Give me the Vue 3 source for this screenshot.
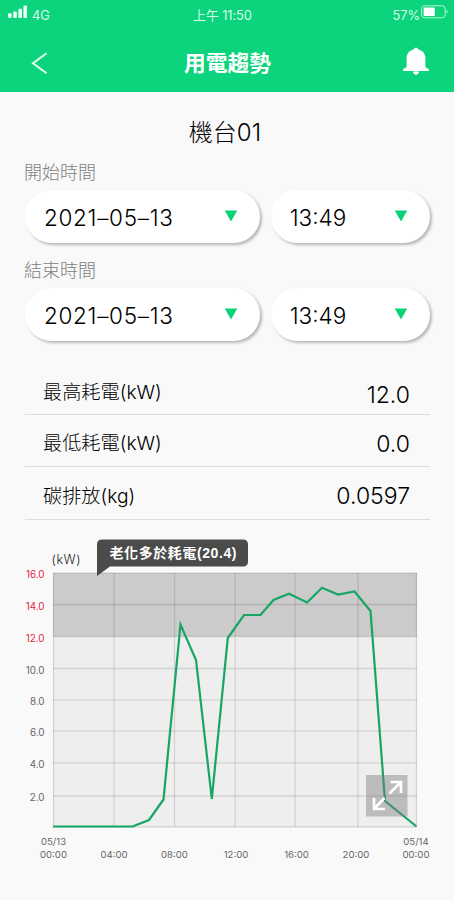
<template>
  <div class="trend">
    <header class="trend__header">
      <div class="trend__status">
        <div class="trend__status-side">
          <svg class="trend__signal" width="20" height="14" viewBox="0 0 20 14">
            <rect x="0" y="8.3" width="3.6" height="4.7" rx="1" />
            <rect x="5.2" y="6.4" width="3.6" height="6.6" rx="1" />
            <rect x="10.4" y="3.8" width="3.6" height="9.2" rx="1" />
            <rect x="15.4" y="0.6" width="3.6" height="12.4" rx="1" />
          </svg>
          <span class="trend__network">4G</span>
        </div>
        <span class="trend__clock">上午 11:50</span>
        <div class="trend__status-side trend__status-side--end">
          <span class="trend__percent">57%</span>
          <svg class="trend__battery" width="28" height="14" viewBox="0 0 28 14">
            <rect x="0.6" y="0.8" width="23.6" height="12" rx="3" fill="none" stroke="#b9f3d5" />
            <rect x="2.6" y="2.6" width="11.2" height="8.4" rx="1" fill="#fff" />
            <path d="M25.6 4.8 Q27.6 6.8 25.6 8.8Z" fill="#d8f9e8" />
          </svg>
        </div>
      </div>
      <nav class="trend__nav">
        <svg class="trend__back" width="18" height="24" viewBox="0 0 18 24">
          <path d="M15.5 2.2 L2 12.2 L15.5 22.2" fill="none" stroke="#e4fff1" stroke-width="2" />
        </svg>
        <h1 class="trend__heading">用電趨勢</h1>
        <svg class="trend__bell" width="28" height="28" viewBox="0 0 28 28">
          <path d="M14 0.8 C12.6 0.8 11.8 1.5 11.6 2.4 C7.2 3.4 4.6 6.8 4.6 11 V19 C4.6 20.4 3.6 21 2 21.6 C0.4 22.2 0.6 24 2 24 H26 C27.4 24 27.6 22.2 26 21.6 C24.4 21 23.4 20.4 23.4 19 V11 C23.4 6.8 20.8 3.4 16.4 2.4 C16.2 1.5 15.4 0.8 14 0.8Z" fill="#fff" />
          <path d="M11 24.5 H17 C17 28.7 11 28.7 11 24.5Z" fill="#fff" />
        </svg>
      </nav>
    </header>

    <main class="trend__body">
      <h2 class="trend__machine">機台01</h2>

      <section v-for="range in ranges" :key="range.label" class="trend__range">
        <div class="trend__label">{{ range.label }}</div>
        <div class="trend__pickers">
          <button class="trend__picker trend__picker--date">
            <span>{{ range.date }}</span>
            <svg width="14" height="12" viewBox="0 0 14 12"><path d="M0.8 0.5 H13.2 L7 11.5Z" fill="#09d276" /></svg>
          </button>
          <button class="trend__picker trend__picker--time">
            <span>{{ range.time }}</span>
            <svg width="14" height="12" viewBox="0 0 14 12"><path d="M0.8 0.5 H13.2 L7 11.5Z" fill="#09d276" /></svg>
          </button>
        </div>
      </section>

      <dl class="trend__stats">
        <div v-for="stat in stats" :key="stat.label" class="trend__stat">
          <dt>{{ stat.label }}</dt>
          <dd>{{ stat.value }}</dd>
        </div>
      </dl>
    </main>

    <svg class="chart" width="454" height="370" viewBox="0 530 454 370">
      <rect x="53" y="573" width="364" height="254" fill="#eeeeee" />
      <rect x="53" y="573" width="364" height="63.5" fill="#cbcbcb" />
      <path v-for="x in gridX" :key="'x' + x" :d="`M${x} 573V827`" class="chart__grid" />
      <path v-for="tick in yTicks" :key="'y' + tick.y" :d="`M53 ${tick.y}H417`" class="chart__grid" />
      <path d="M53 827H417" class="chart__grid" />

      <text x="51.5" y="564" class="chart__unit" textLength="29">(kW)</text>
      <text
        v-for="tick in yTicks"
        :key="tick.label"
        x="44.5"
        :y="tick.y + 5.2"
        class="chart__y"
        :class="{ 'chart__y--over': tick.over }"
      >{{ tick.label }}</text>

      <text v-for="tick in xTicks" :key="tick.x" :x="tick.x" y="857.5" class="chart__x">{{ tick.label }}</text>
      <text x="53.5" y="845" class="chart__x">05/13</text>
      <text x="416" y="845" class="chart__x">05/14</text>

      <polyline :points="linePoints" class="chart__line" />

      <g class="chart__expand">
        <rect x="366" y="775" width="41.5" height="41.5" fill="#777" fill-opacity="0.42" />
        <path d="M389.5 793.5 L401 782 M390.5 782 H401 V793 M384.5 798 L374 809 M374 798 V809 H385" fill="none" stroke="#fff" stroke-width="2.7" />
      </g>

      <path d="M102 539.5 H243 Q248 539.5 248 544.5 V561.5 Q248 566.5 243 566.5 H110 L97 576 V544.5 Q97 539.5 102 539.5Z" fill="#4b4b4b" />
      <text x="109.5" y="558" class="chart__tip" textLength="127">老化多於耗電(20.4)</text>
    </svg>
  </div>
</template>

<script setup>
import { computed } from 'vue'

const ranges = [
  { label: '開始時間', date: '2021–05–13', time: '13:49' },
  { label: '結束時間', date: '2021–05–13', time: '13:49' },
]

const stats = [
  { label: '最高耗電(kW)', value: '12.0' },
  { label: '最低耗電(kW)', value: '0.0' },
  { label: '碳排放(kg)', value: '0.0597' },
]

const gridX = [53.5, 114, 174.5, 235.2, 295.2, 358, 416.5]

const yTicks = [
  { label: '16.0', y: 573, over: true },
  { label: '14.0', y: 604.5, over: true },
  { label: '12.0', y: 636.5, over: true },
  { label: '10.0', y: 668.5 },
  { label: '8.0', y: 700.2 },
  { label: '6.0', y: 731.2 },
  { label: '4.0', y: 762.8 },
  { label: '2.0', y: 796 },
]

const xTicks = [
  { label: '00:00', x: 53.5 },
  { label: '04:00', x: 114 },
  { label: '08:00', x: 174.5 },
  { label: '12:00', x: 236 },
  { label: '16:00', x: 296.5 },
  { label: '20:00', x: 356 },
  { label: '00:00', x: 416 },
]

const series = [
  [53, 826.5], [132.5, 826.5], [149, 820], [163.5, 799.5], [180.5, 624.5],
  [196, 660], [211.8, 799], [227.8, 638], [244, 615], [260.5, 615],
  [273.5, 600], [289, 593.8], [307, 602.5], [322, 587.8], [338, 594.5],
  [354.5, 591.5], [370.5, 611], [385, 801], [416.5, 826.5],
]
const linePoints = computed(() => series.map((p) => p.join(',')).join(' '))
</script>

<style>
body { background: #f9f9f9; }
</style>

<style scoped>
.trend { width: 454px; height: 900px; overflow: hidden; background: #f9f9f9; color: #222; font-family: Inter, 'Noto Sans CJK TC', sans-serif; font-weight: 300; }
.trend__header { height: 92px; background: #0bd47c; color: #fff; }
.trend__status { display: grid; grid-template-columns: 1fr auto 1fr; height: 30px; padding: 0 5px 0 8px; box-sizing: border-box; color: #d8fbe9; font-weight: 400; }
.trend__status-side { display: flex; align-items: flex-start; padding-top: 5px; }
.trend__status-side--end { justify-content: flex-end; padding-top: 5px; }
.trend__signal { fill: #e9fff4; }
.trend__network { margin: 3px 0 0 4px; font-size: 12.8px; line-height: 15px; }
.trend__clock { margin: 8px 6px 0 -6px; font-size: 12.9px; letter-spacing: -0.1px; line-height: 16px; }
.trend__percent { margin: 3px 0 0; font-size: 12.8px; line-height: 15px; }
.trend__battery { margin-left: 1px; }
.trend__nav { display: grid; grid-template-columns: 1fr auto 1fr; align-items: center; height: 62px; padding: 0 24px 0 31px; }
.trend__heading { margin: 4px 0 0 -6px; font-size: 21.7px; line-height: 30px; font-weight: 700; }
.trend__back { margin-top: 4px; }
.trend__bell { justify-self: end; }

.trend__body { padding: 0 24px 0 25px; }
.trend__machine { margin: 0; padding: 24px 5px 0 0; font-size: 24px; line-height: 34px; font-weight: 300; text-align: center; color: #000; }
.trend__range { height: 98px; }
.trend__range:first-of-type { margin-top: 10px; }
.trend__label { height: 29px; padding-top: 1px; margin-left: -1px; font-size: 18px; line-height: 24px; color: #808080; }
.trend__pickers { display: flex; gap: 11px; }
.trend__picker { display: flex; align-items: center; justify-content: space-between; height: 53px; padding: 3px 22px 0 19px; border: 0; border-radius: 27px; background: #fff; box-shadow: 2px 2px 3px rgba(0, 0, 0, 0.27); color: #000; font: inherit; font-size: 22.5px; }
.trend__picker--date { width: 236px; letter-spacing: 0.7px; }
.trend__picker--time { width: 160px; }
.trend__picker svg { margin-bottom: 5px; }
.trend__picker span { margin-top: -1px; }

.trend__stats { margin: 6px 0 0; }
.trend__stat { display: flex; align-items: center; justify-content: space-between; height: 52.6px; padding: 6px 20px 0 18px; border-bottom: 1px solid #dcdcdc; box-sizing: border-box; color: #000; }
.trend__stat dt { font-size: 19.2px; line-height: 28px; }
.trend__stat dd { margin: 0; padding-top: 1px; font-size: 23px; line-height: 28px; color: #000; }
.trend__stat:first-child dt { padding-top: 2px; }
.trend__stat:first-child dd { padding-top: 9px; }

.chart { display: block; margin-top: 10px; }
.chart__grid { fill: none; stroke: #000; stroke-opacity: 0.11; stroke-width: 1.3; }
.chart__line { fill: none; stroke: #17a664; stroke-width: 2.2; }
.chart__unit { font-size: 12.5px; fill: #222; }
.chart__y { font-size: 9.8px; font-weight: 400; fill: #666; text-anchor: end; }
.chart__y--over { fill: #e0283c; }
.chart__x { font-size: 9.6px; font-weight: 400; fill: #666; text-anchor: middle; }
.chart__tip { font-family: 'Liberation Sans', 'Noto Sans CJK TC', sans-serif; font-size: 14px; font-weight: 700; fill: #fff; }
</style>
